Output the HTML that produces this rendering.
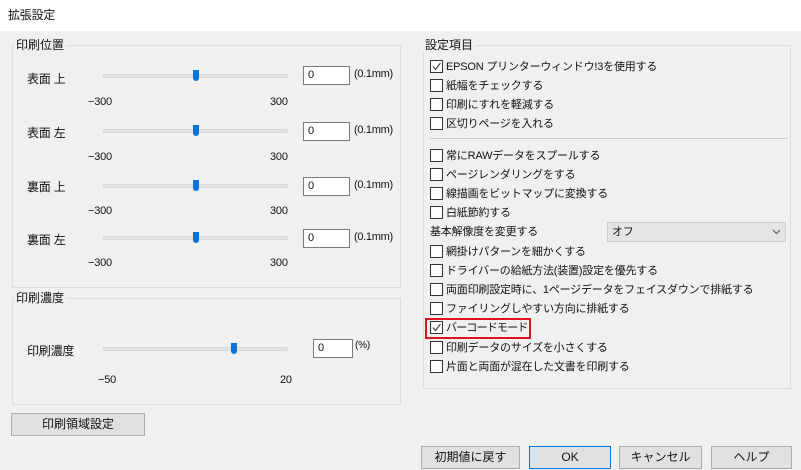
<!DOCTYPE html><html><head><meta charset="utf-8"><style>
*{margin:0;padding:0;box-sizing:border-box}
body{width:801px;height:470px;background:#f0f0f0;font-family:"Liberation Sans","Noto Sans CJK JP",sans-serif;font-size:11px;color:#111;position:relative;overflow:hidden}
.a{position:absolute;white-space:nowrap;line-height:14px;letter-spacing:-0.2px}
.L{font-size:12px}
.title{position:absolute;left:0;top:0;width:801px;height:31px;background:#fff}
.grp{position:absolute;border:1px solid #dcdcdc}
.lg{position:absolute;background:#f0f0f0;padding:0 2px;line-height:14px;font-size:12px}
.trk{position:absolute;height:4px;background:#e3e3e3;border:1px solid #dadada}
.th{position:absolute;width:6px;height:11px;background:#0a74d6;border-radius:0 0 3px 3px}
.inp{position:absolute;width:47px;height:19px;background:#fff;border:1px solid #7a7a7a;padding-left:4px;line-height:17px}
.cb{position:absolute;width:13px;height:13px;background:#fff;border:1px solid #333}
.btn{position:absolute;height:23px;background:#e1e1e1;border:1px solid #adadad;text-align:center;line-height:21px;font-size:12px}
</style></head><body>
<div class="title"></div>
<div class="a" style="left:8px;top:8px;font-size:12px">拡張設定</div>

<div class="grp" style="left:12px;top:45px;width:389px;height:243px"></div>
<div class="lg" style="left:14px;top:38px">印刷位置</div>
<div class="grp" style="left:12px;top:298px;width:389px;height:107px"></div>
<div class="lg" style="left:14px;top:291px">印刷濃度</div>

<div class="a L" style="left:27px;top:72px">表面 上</div>
<div class="a L" style="left:27px;top:126px">表面 左</div>
<div class="a L" style="left:27px;top:180px">裏面 上</div>
<div class="a L" style="left:27px;top:233px">裏面 左</div>
<div class="trk" style="left:103px;top:74px;width:185px"></div><div class="th" style="left:193px;top:70px"></div>
<div class="trk" style="left:103px;top:129px;width:185px"></div><div class="th" style="left:193px;top:125px"></div>
<div class="trk" style="left:103px;top:184px;width:185px"></div><div class="th" style="left:193px;top:180px"></div>
<div class="trk" style="left:103px;top:236px;width:185px"></div><div class="th" style="left:193px;top:232px"></div>
<div class="a" style="left:88px;top:95px">−300</div><div class="a" style="left:270px;top:95px">300</div>
<div class="a" style="left:88px;top:150px">−300</div><div class="a" style="left:270px;top:150px">300</div>
<div class="a" style="left:88px;top:204px">−300</div><div class="a" style="left:270px;top:204px">300</div>
<div class="a" style="left:88px;top:256px">−300</div><div class="a" style="left:270px;top:256px">300</div>
<div class="inp" style="left:303px;top:66px">0</div><div class="a" style="left:354px;top:67px;letter-spacing:-0.3px">(0.1mm)</div>
<div class="inp" style="left:303px;top:122px">0</div><div class="a" style="left:354px;top:123px;letter-spacing:-0.3px">(0.1mm)</div>
<div class="inp" style="left:303px;top:177px">0</div><div class="a" style="left:354px;top:178px;letter-spacing:-0.3px">(0.1mm)</div>
<div class="inp" style="left:303px;top:229px">0</div><div class="a" style="left:354px;top:230px;letter-spacing:-0.3px">(0.1mm)</div>

<div class="a L" style="left:27px;top:344px">印刷濃度</div>
<div class="trk" style="left:103px;top:347px;width:185px"></div><div class="th" style="left:231px;top:343px"></div>
<div class="inp" style="left:313px;top:339px;width:40px">0</div><div class="a" style="left:355px;top:339px;font-size:10px">(%)</div>
<div class="a" style="left:98px;top:373px">−50</div><div class="a" style="left:280px;top:373px">20</div>
<div class="btn" style="left:11px;top:413px;width:134px">印刷領域設定</div>

<div class="grp" style="left:423px;top:45px;width:368px;height:344px"></div>
<div class="lg" style="left:423px;top:38px">設定項目</div>
<div style="position:absolute;left:430px;top:138px;width:357px;height:1px;background:#c8c8c8"></div>

<div class="cb" style="left:430px;top:60px"></div><svg style="position:absolute;left:431px;top:61px" width="11" height="11"><path d="M2 5.5 L4.5 8.5 L9.5 2" stroke="#444" stroke-width="1.2" fill="none"/></svg><div class="a" style="left:446px;top:60px">EPSON プリンターウィンドウ!3を使用する</div>
<div class="cb" style="left:430px;top:79px"></div><div class="a" style="left:446px;top:79px">紙幅をチェックする</div>
<div class="cb" style="left:430px;top:98px"></div><div class="a" style="left:446px;top:98px">印刷にすれを軽減する</div>
<div class="cb" style="left:430px;top:117px"></div><div class="a" style="left:446px;top:117px">区切りページを入れる</div>
<div class="cb" style="left:430px;top:149px"></div><div class="a" style="left:446px;top:149px">常にRAWデータをスプールする</div>
<div class="cb" style="left:430px;top:168px"></div><div class="a" style="left:446px;top:168px">ページレンダリングをする</div>
<div class="cb" style="left:430px;top:187px"></div><div class="a" style="left:446px;top:187px">線描画をビットマップに変換する</div>
<div class="cb" style="left:430px;top:206px"></div><div class="a" style="left:446px;top:206px">白紙節約する</div>
<div class="a" style="left:430px;top:225px">基本解像度を変更する</div>
<div style="position:absolute;left:607px;top:222px;width:179px;height:20px;background:#e5e5e5;border:1px solid #cfcfcf"></div>
<div class="a" style="left:612px;top:225px">オフ</div><svg style="position:absolute;left:772px;top:229px" width="9" height="6"><path d="M1 1 L4.5 4.5 L8 1" stroke="#555" fill="none"/></svg>
<div class="cb" style="left:430px;top:245px"></div><div class="a" style="left:446px;top:245px">網掛けパターンを細かくする</div>
<div class="cb" style="left:430px;top:264px"></div><div class="a" style="left:446px;top:264px">ドライバーの給紙方法(装置)設定を優先する</div>
<div class="cb" style="left:430px;top:283px"></div><div class="a" style="left:446px;top:283px">両面印刷設定時に、1ページデータをフェイスダウンで排紙する</div>
<div class="cb" style="left:430px;top:302px"></div><div class="a" style="left:446px;top:302px">ファイリングしやすい方向に排紙する</div>
<div class="cb" style="left:430px;top:321px"></div><svg style="position:absolute;left:431px;top:322px" width="11" height="11"><path d="M2 5.5 L4.5 8.5 L9.5 2" stroke="#444" stroke-width="1.2" fill="none"/></svg><div class="a" style="left:446px;top:321px;letter-spacing:-0.8px">バーコードモード</div>
<div style="position:absolute;left:425px;top:318px;width:106px;height:21px;border:2px solid #e0141e"></div>
<div class="cb" style="left:430px;top:341px"></div><div class="a" style="left:446px;top:341px">印刷データのサイズを小さくする</div>
<div class="cb" style="left:430px;top:360px"></div><div class="a" style="left:446px;top:360px">片面と両面が混在した文書を印刷する</div>

<div class="btn" style="left:421px;top:446px;width:99px">初期値に戻す</div>
<div class="btn" style="left:529px;top:446px;width:82px;border:1px solid #0078d7">OK</div>
<div class="btn" style="left:619px;top:446px;width:83px">キャンセル</div>
<div class="btn" style="left:711px;top:446px;width:81px">ヘルプ</div>
</body></html>
